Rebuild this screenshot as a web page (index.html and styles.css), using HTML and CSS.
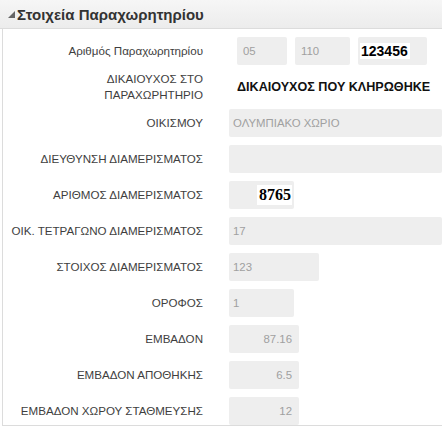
FILE: index.html
```html
<!DOCTYPE html>
<html>
<head>
<meta charset="utf-8">
<link rel="stylesheet" href="styles.css">
</head>
<body>
<div class="panel">
  <div class="header">
    <svg class="tri" width="7" height="7" viewBox="0 0 7 7"><polygon points="7,0 7,7 0,7" fill="#666"/></svg>
    <span class="title">Στοιχεία Παραχωρητηρίου</span>
  </div>
  <div class="body">
    <div class="row">
      <div class="label">Αριθμός Παραχωρητηρίου</div>
      <div class="field multi">
        <div class="box w50">05</div>
        <div class="box w55">110</div>
        <div class="box w69"><span class="hl sans">123456</span></div>
      </div>
    </div>
    <div class="row">
      <div class="label two">ΔΙΚΑΙΟΥΧΟΣ ΣΤΟ<br>ΠΑΡΑΧΩΡΗΤΗΡΙΟ</div>
      <div class="field plain">ΔΙΚΑΙΟΥΧΟΣ ΠΟΥ ΚΛΗΡΩΘΗΚΕ</div>
    </div>
    <div class="row">
      <div class="label">ΟΙΚΙΣΜΟΥ</div>
      <div class="field"><div class="box full">ΟΛΥΜΠΙΑΚΟ ΧΩΡΙΟ</div></div>
    </div>
    <div class="row">
      <div class="label">ΔΙΕΥΘΥΝΣΗ ΔΙΑΜΕΡΙΣΜΑΤΟΣ</div>
      <div class="field"><div class="box full"></div></div>
    </div>
    <div class="row">
      <div class="label">ΑΡΙΘΜΟΣ ΔΙΑΜΕΡΙΣΜΑΤΟΣ</div>
      <div class="field"><div class="box w65 right tight"><span class="hl serif">8765</span></div></div>
    </div>
    <div class="row">
      <div class="label">ΟΙΚ. ΤΕΤΡΑΓΩΝΟ ΔΙΑΜΕΡΙΣΜΑΤΟΣ</div>
      <div class="field"><div class="box full">17</div></div>
    </div>
    <div class="row">
      <div class="label">ΣΤΟΙΧΟΣ ΔΙΑΜΕΡΙΣΜΑΤΟΣ</div>
      <div class="field"><div class="box w90">123</div></div>
    </div>
    <div class="row">
      <div class="label">ΟΡΟΦΟΣ</div>
      <div class="field"><div class="box w65">1</div></div>
    </div>
    <div class="row">
      <div class="label">ΕΜΒΑΔΟΝ</div>
      <div class="field"><div class="box w70 right">87.16</div></div>
    </div>
    <div class="row">
      <div class="label">ΕΜΒΑΔΟΝ ΑΠΟΘΗΚΗΣ</div>
      <div class="field"><div class="box w70 right">6.5</div></div>
    </div>
    <div class="row">
      <div class="label">ΕΜΒΑΔΟΝ ΧΩΡΟΥ ΣΤΑΘΜΕΥΣΗΣ</div>
      <div class="field"><div class="box w70 right">12</div></div>
    </div>
  </div>
</div>
</body>
</html>
```
FILE: styles.css
```css
html, body {
  margin: 0;
  padding: 0;
  background: #fff;
}
body {
  font-family: "Liberation Sans", Arial, sans-serif;
  width: 442px;
  height: 428px;
  overflow: hidden;
}
.header {
  height: 28px;
  border-bottom: 1px solid #dcdcdc;
  background: linear-gradient(#f6f6f6, #ececec);
  display: flex;
  align-items: center;
  padding-left: 8px;
  gap: 2px;
}
.tri {
  display: block;
  margin-top: 1px;
}
.title {
  font-weight: bold;
  font-size: 15px;
  color: #333;
}
.body {
  margin-left: 2px;
  border-left: 1px solid #dcdcdc;
  border-bottom: 1px solid #dcdcdc;
  padding-top: 8px;
  display: flex;
  flex-direction: column;
  gap: 8px;
}
.row {
  display: flex;
  align-items: center;
  height: 28px;
}
.label {
  width: 200px;
  flex: none;
  text-align: right;
  font-size: 11.6px;
  color: #3e3e3e;
  margin-right: 26px;
  line-height: 16px;
}
.field {
  flex: 1;
  display: flex;
  align-items: center;
  height: 28px;
}
.field.multi {
  padding-left: 8px;
  gap: 8px;
}
.field.plain {
  padding-left: 8px;
  font-size: 12.6px;
  font-weight: bold;
  color: #111;
}
.box {
  height: 28px;
  background: #eeeeee;
  border-radius: 2px;
  box-sizing: border-box;
  display: flex;
  align-items: center;
  padding: 0 6px 0 4px;
  font-size: 11.4px;
  color: #a0a0a0;
}
.multi .box {
  padding-left: 6px;
}
.box.full {
  flex: 1;
}
.box.right {
  justify-content: flex-end;
  padding-right: 7px;
}
.box.tight {
  padding-right: 2px;
}
.w50 { width: 50px; }
.w55 { width: 55px; }
.w69 { width: 69px; padding-left: 2px !important; }
.w65 { width: 65px; }
.w70 { width: 70px; }
.w90 { width: 90px; }
.hl {
  background: #fff;
  color: #000;
  font-weight: bold;
}
.hl.sans {
  font-family: "Liberation Sans", Arial, sans-serif;
  font-size: 14px;
  line-height: 16px;
  padding: 0 2px 0 1px;
}
.hl.serif {
  font-family: "Liberation Serif", "Times New Roman", serif;
  font-size: 16px;
  line-height: 20px;
  padding: 0 1px 0 2px;
}
```
